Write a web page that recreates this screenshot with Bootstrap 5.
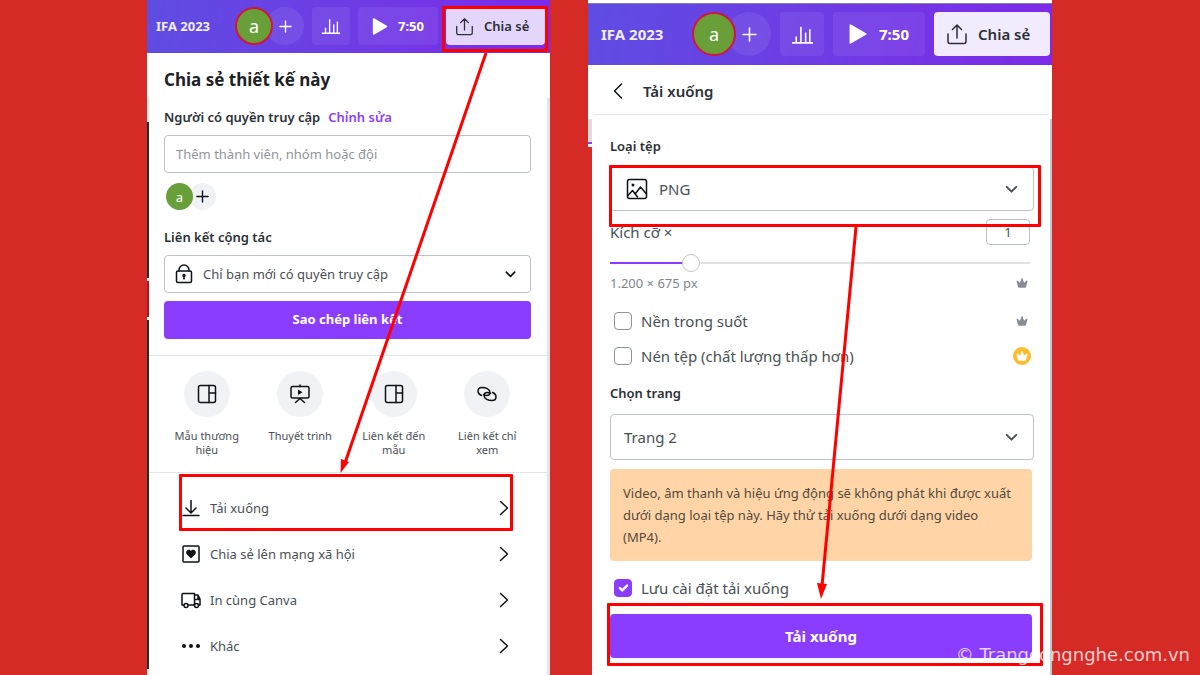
<!DOCTYPE html>
<html lang="vi">
<head>
<meta charset="utf-8">
<meta name="viewport" content="width=device-width, initial-scale=1">
<title>Chia sẻ thiết kế</title>
<link href="https://cdn.jsdelivr.net/npm/bootstrap@5.3.0/dist/css/bootstrap.min.css" rel="stylesheet">
<style>
:root{--violet:#8b3dff;--ink:#0d1216;--head:#2b3036;--soft:#4a4f55;--line:#bdc3c9;--mark:#ff0000}
body{background:#d62a26;font-family:"Noto Sans",sans-serif;color:var(--ink);font-size:13px;line-height:18px}
svg{display:block;fill:none;stroke:currentColor;stroke-width:1.5;stroke-linecap:round;stroke-linejoin:round;flex:none}
.stage{display:grid;grid-template-columns:147fr 403fr 38fr 464fr 148fr;min-height:100vh}
.shot{display:flex;flex-direction:column;position:relative;min-width:0}
.shot-share{grid-column:2;background:linear-gradient(#fff 98px,#e2e3e8 98px) right/50% 100% no-repeat,linear-gradient(#fff 98px,#e2e3e8 98px 122px,#2a2a2d 122px 278px,#fff 278px 281px,#b3151c 281px 317px,#fff 317px 320px,#2a2a2d 320px 669px,#e2e3e8 669px)}
.shot-download{grid-column:4;background:linear-gradient(#fff 119px,#c9c6d6 119px) right/50% 100% no-repeat,linear-gradient(#fff 119px,#dcdce3 119px 142px,var(--violet) 142px 144px,#fff 144px 147px,#d62a26 147px)}
.topbar{background:linear-gradient(100deg,#5f4de2,#7d2ae8);color:#fff;height:53px;padding:7px 5px 8px 9px;--size:38px;--gap:8px}
.doc-name{font-weight:700;color:#f0edff}
.tools{gap:var(--gap)}
.avatar{width:var(--size);height:var(--size);border-radius:50%;background:#689f38;color:#fff;display:flex;align-items:center;justify-content:center;position:relative;z-index:1}
.topbar .avatar{border:2px solid #d3143c;font-size:18px}
.plus{width:var(--size);height:var(--size);border-radius:50%;border:0;padding:0;display:flex;align-items:center;justify-content:center;margin-left:-7px;background:#ffffff14;color:inherit}
.tool{height:var(--size);border:0;border-radius:4px;background:#ffffff12;color:#fff;display:flex;align-items:center;justify-content:center;padding:0;font-weight:700;position:relative}
.tool-chart{width:var(--size)}
.tool-play{width:80px;gap:10px}
.tool-share{width:99px;gap:10px;background:#e4d6fb;color:var(--head);font-weight:600;justify-content:start;padding-left:9px}
.shot-download .topbar{height:65px;border-top:3px solid #fff;box-shadow:inset 0 1px #85809c;padding:9px 2px 9px 13px;font-size:15px;--size:44px;--gap:9px}
.shot-download .tool-play{width:92px;gap:12px}
.shot-download .tool-share{width:116px;gap:10px;padding-left:12px;background:#f2eafd}
.shot-download .plus{margin-left:-9px}
.marked{position:relative}
.marked::after{content:"";position:absolute;border:3px solid var(--mark);z-index:2;pointer-events:none;border-radius:1px}
.tool-share.marked::after{inset:-1px -3px -7px -4px}
.sheet{background:#fff;flex:1;position:relative}
.shot-share .sheet{margin:0 3px 0 2px}
.shot-download .sheet{margin:0 2px 0 4px}
.sheet-part{padding:15px 16px 16px 15px}
.sheet-title{font-size:17px;line-height:24px;font-weight:700;margin:0 0 16px;color:#1d2227}
.lbl{font-weight:600;margin:0;color:var(--head)}
.lnk{color:var(--violet);text-decoration:none;font-weight:600}
.lbl-row{margin-bottom:9px}
.field{font-size:13px;line-height:20px;border:1px solid var(--line);border-radius:4px;color:var(--soft);height:38px;padding:0 11px;background:#fff}
.field::placeholder{color:#90959a}
.pick{position:relative}
.pick .field{width:100%;appearance:none}
.pick svg{position:absolute;top:50%;transform:translateY(-50%);pointer-events:none}
.pick .lead-ico{left:11px;color:var(--ink)}
.pick .arrow{right:14px}
.with-ico .field{padding-left:38px}
.people{--size:27px;padding-left:2px;margin:10px 0 18px}
.people .plus{background:#f1f2f5;margin-left:-4px}
.btn-violet{--bs-btn-bg:var(--violet);--bs-btn-color:#fff;--bs-btn-hover-bg:#7731d8;--bs-btn-hover-color:#fff;--bs-btn-border-color:transparent;--bs-btn-border-radius:4px;--bs-btn-padding-y:0;font-size:13px;font-weight:700;height:38px}
.rule{border-top:1px solid #e3e5e8}
.shortcuts{padding:15px 13px 15px 11px;display:grid;grid-template-columns:repeat(4,1fr)}
.shortcut{border:0;background:none;padding:0 8px;font-size:11px;line-height:14px;color:var(--soft);display:flex;flex-direction:column;align-items:center}
.disc{width:46px;height:46px;border-radius:50%;background:#f1f2f5;color:var(--ink);display:flex;align-items:center;justify-content:center;margin-bottom:12px}
.actions{padding:12px 38px 0 32px}
.action{height:46px;display:flex;align-items:center;gap:9px;color:var(--soft);text-decoration:none}
.action svg{color:var(--ink)}
.action.marked::after{inset:-11px -4px 0 -2px}
.sheet-head{height:50px;padding:3px 18px 0;margin:0 2px;border-bottom:1px solid #e3e5e8;gap:19px}
.sheet-head h2{font-size:15px;line-height:22px;font-weight:600;margin:0;color:var(--head)}
.back{border:0;background:none;padding:0;color:var(--ink)}
.form-part{padding:21px 16px 16px 18px;color:var(--soft);font-size:15px;line-height:22px}
.form-part .lbl{font-size:13px;line-height:20px}
.form-part .field{font-size:15px;height:46px;padding-left:13px}
.form-part .with-ico .field{padding-left:48px;height:45px}
.form-part .lead-ico{left:16px}
.form-part .arrow{right:15px}
.lbl-type{margin-bottom:10px}
.pick-type.marked::after{inset:-1px -7px -16px -1px}
.form-part .qty{width:44px;height:26px;font-size:13px;padding:0;text-align:center}
.size-row{margin:9px 4px 1px 0}
.size-range{appearance:none;width:100%;height:18px;margin:0;background:linear-gradient(var(--violet),var(--violet)) 0 50%/19% 2px no-repeat,linear-gradient(#e1e3e6,#e1e3e6) 0 50%/100% 2px no-repeat;display:block}
.size-range::-webkit-slider-thumb{appearance:none;width:18px;height:18px;border-radius:50%;background:#fff;border:1px solid #bfc4ca}
.note{font-size:13px;line-height:20px;color:#80868c}
.crown{fill:#878d94;stroke:none}
.opt{display:flex;justify-content:space-between;align-items:center;padding-right:6px}
.opt-clear{margin-top:17px}
.opt-pro{padding-right:3px;margin:13px 0}
.pro{width:18px;height:18px;border-radius:50%;background:#fdbc2c;display:flex;align-items:center;justify-content:center}
.pro .crown{fill:#fff}
.tick{padding-left:4px;gap:9px;display:flex;align-items:center}
.tick .form-check-input{width:18px;height:18px;margin:0;border-color:#8f959b;border-radius:4px;float:none}
.tick .form-check-input:checked{background-color:var(--violet);border-color:var(--violet)}
.lbl-page{margin:16px 0 11px}
.form-part .lbl-page{margin:16px 0 11px}
.form-part .lbl-type{margin-bottom:10px}
.hint{background:#ffd5a8;border-radius:4px;padding:13px;font-size:13px;line-height:22px;color:#54493c;margin:9px 2px 16px 0}
.save{margin:15px 2px 0 0}
.save.marked::after{inset:-11px -11px -8px -3px}
.save .btn-violet{font-size:15px;height:44px}
.pointer{position:absolute;left:0;top:0;width:100%;height:auto;z-index:3;pointer-events:none;stroke:var(--mark);stroke-width:3;stroke-linecap:butt;overflow:visible}
.pointer polygon{fill:var(--mark);stroke:none}
.credit{position:absolute;right:10px;bottom:8px;z-index:4;color:#ffffffc8;font-family:"DejaVu Sans","Noto Sans",sans-serif;font-size:18px;line-height:24px;margin:0}
</style>
</head>
<body>
<svg width="0" height="0" class="position-absolute" aria-hidden="true">
  <symbol id="i-plus" viewBox="0 0 14 14"><path d="M7 1v12M1 7h12"/></symbol>
  <symbol id="i-chart" viewBox="0 0 22 22"><path d="M1 19h20M5 19v-6M9.500 19V3.500M14 19V9M18 19V6" stroke-linecap="butt"/></symbol>
  <symbol id="i-up" viewBox="0 0 22 22"><path d="M11 15V2M6.500 6.500 11 2l4.500 4.500M2 11v7.500a2 2 0 0 0 2 2h14a2 2 0 0 0 2-2V11"/></symbol>
  <symbol id="i-down" viewBox="0 0 14 14"><path d="M2.500 5 7 9.500 11.500 5" stroke-width="1.800"/></symbol>
  <symbol id="i-next" viewBox="0 0 10 16"><path d="m1.500 1.500 7 6.500-7 6.500"/></symbol>
  <symbol id="i-layout" viewBox="0 0 20 20"><rect x="1.500" y="1.500" width="17" height="17" rx="2"/><path d="M12 1.500v17M12 9h6.500"/></symbol>
  <symbol id="i-crown" viewBox="0 0 12 12"><path d="M.5 4 1.500 3.500 3.800 5.700 5.300 2.200 5.300 1.200h1.400v1l1.500 3.500 2.300-2.200 1 .5L10 10a1 1 0 0 1-1 .8H3A1 1 0 0 1 2 10z"/></symbol>
</svg>
<main class="stage position-relative">
  <section class="shot shot-share">
    <header class="topbar d-flex align-items-center">
      <span class="doc-name">IFA 2023</span>
      <div class="tools d-flex ms-auto">
        <div class="d-flex"><span class="avatar">a</span><button class="plus" type="button" aria-label="Thêm"><svg width="13" height="13"><use href="#i-plus"/></svg></button></div>
        <button class="tool tool-chart" type="button" aria-label="Thống kê"><svg width="20" height="20" stroke-width="1.300"><use href="#i-chart"/></svg></button>
        <button class="tool tool-play" type="button"><svg width="16" height="17" viewBox="0 0 14 16"><path fill="currentColor" d="M1 1v14l12-7z"/></svg>7:50</button>
        <button class="tool tool-share marked" type="button"><svg width="19" height="19"><use href="#i-up"/></svg>Chia sẻ</button>
      </div>
    </header>
    <div class="sheet">
      <div class="sheet-part">
        <h1 class="sheet-title">Chia sẻ thiết kế này</h1>
        <div class="lbl-row d-flex gap-2"><label class="lbl" for="people">Người có quyền truy cập</label><a class="lnk" href="#">Chỉnh sửa</a></div>
        <input class="field w-100 d-block" id="people" type="text" placeholder="Thêm thành viên, nhóm hoặc đội">
        <div class="people d-flex"><span class="avatar">a</span><button class="plus" type="button" aria-label="Thêm người"><svg width="13" height="13"><use href="#i-plus"/></svg></button></div>
        <div class="lbl-row"><label class="lbl d-block" for="access">Liên kết cộng tác</label></div>
        <div class="pick with-ico">
          <svg class="lead-ico" width="18" height="20" viewBox="0 0 18 20"><rect x="1.500" y="7" width="15" height="11.500" rx="1.500"/><path d="M4 7V6a5 5 0 0 1 10 0v1M9 12v3"/><circle cx="9" cy="11.500" r="1" fill="currentColor"/></svg>
          <select class="field" id="access"><option>Chỉ bạn mới có quyền truy cập</option></select>
          <svg class="arrow" width="13" height="13"><use href="#i-down"/></svg>
        </div>
        <button class="btn btn-violet w-100 mt-2" type="button">Sao chép liên kết</button>
      </div>
      <div class="rule shortcuts">
        <button class="shortcut" type="button"><span class="disc"><svg width="20" height="20"><use href="#i-layout"/></svg></span>Mẫu thương hiệu</button>
        <button class="shortcut" type="button"><span class="disc"><svg width="20" height="20" viewBox="0 0 20 20"><rect x="1" y="2.500" width="18" height="11.500" rx="1.500"/><path d="M10 1v1.500M5.500 18.500 10 14.500l4.500 4"/><path fill="currentColor" stroke="none" d="M8 5.500v5.500l4.500-2.750z"/></svg></span>Thuyết trình</button>
        <button class="shortcut" type="button"><span class="disc"><svg width="20" height="20"><use href="#i-layout"/></svg></span>Liên kết đến mẫu</button>
        <button class="shortcut" type="button"><span class="disc"><svg width="20" height="16" viewBox="0 0 20 16"><path d="M4.500 9.500C2.500 8.800 1 7.200 1 5.300 1 3 2.800 1.500 5 1.500c3.500 0 8 1.500 8 5 0 1.800-1.500 3-3.300 3-1.200 0-2.200-.3-3.200-.8M15.500 6.500c2 .7 3.500 2.300 3.500 4.200 0 2.300-1.800 3.800-4 3.800-3.500 0-8-1.500-8-5 0-1.800 1.500-3 3.300-3 1.200 0 2.200.3 3.200.8"/></svg></span>Liên kết chỉ xem</button>
      </div>
      <nav class="rule actions">
        <a class="action marked" href="#"><svg width="20" height="20" viewBox="0 0 20 20"><path d="M10 2.500v12M5 10l5 5 5-5M2 17.500h16"/></svg><span>Tải xuống</span><svg class="ms-auto" width="10" height="16"><use href="#i-next"/></svg></a>
        <a class="action" href="#"><svg width="20" height="20" viewBox="0 0 20 20"><rect x="2" y="2" width="16" height="16" rx="1"/><path fill="currentColor" stroke="none" d="M10 14.500 6 10.500C4 8 6 5.500 8 5.700c1 0 1.700.6 2 1.300.3-.7 1-1.300 2-1.300 2-.2 4 2.300 2 4.800z"/></svg><span>Chia sẻ lên mạng xã hội</span><svg class="ms-auto" width="10" height="16"><use href="#i-next"/></svg></a>
        <a class="action" href="#"><svg width="20" height="20" viewBox="0 0 20 20"><path d="M2.500 15H1V4.500a1 1 0 0 1 1-1h11.500V15H7.500M13.500 5H17l2 4v6h-1M14 9.500h5M17 5v4.500"/><circle cx="5" cy="15.500" r="2"/><circle cx="15.500" cy="15.500" r="2"/></svg><span>In cùng Canva</span><svg class="ms-auto" width="10" height="16"><use href="#i-next"/></svg></a>
        <a class="action" href="#"><svg width="20" height="20" viewBox="0 0 20 20"><g fill="currentColor" stroke="none"><circle cx="3" cy="10" r="2"/><circle cx="10" cy="10" r="2"/><circle cx="17" cy="10" r="2"/></g></svg><span>Khác</span><svg class="ms-auto" width="10" height="16"><use href="#i-next"/></svg></a>
      </nav>
    </div>
    <svg class="pointer" viewBox="0 0 403 675" aria-hidden="true"><path d="M339 53 198 463"/><polygon points="193.500,473 194,459 202,462"/></svg>
  </section>

  <section class="shot shot-download">
    <header class="topbar d-flex align-items-center">
      <span class="doc-name">IFA 2023</span>
      <div class="tools d-flex ms-auto">
        <div class="d-flex"><span class="avatar">a</span><button class="plus" type="button" aria-label="Thêm"><svg width="15" height="15"><use href="#i-plus"/></svg></button></div>
        <button class="tool tool-chart" type="button" aria-label="Thống kê"><svg width="23" height="23"><use href="#i-chart"/></svg></button>
        <button class="tool tool-play" type="button"><svg width="18" height="20" viewBox="0 0 14 16"><path fill="currentColor" d="M1 1v14l12-7z"/></svg>7:50</button>
        <button class="tool tool-share" type="button"><svg width="22" height="22"><use href="#i-up"/></svg>Chia sẻ</button>
      </div>
    </header>
    <div class="sheet">
      <div class="sheet-head d-flex align-items-center">
        <button class="back" type="button" aria-label="Quay lại"><svg width="12" height="18" viewBox="0 0 12 18"><path d="M9.500 2 2.500 9l7 7"/></svg></button>
        <h2>Tải xuống</h2>
      </div>
      <form class="form-part" onsubmit="return false">
        <label class="lbl lbl-type d-block" for="type">Loại tệp</label>
        <div class="pick with-ico pick-type marked">
          <svg class="lead-ico" width="22" height="22" viewBox="0 0 22 22"><rect x="1.500" y="1.500" width="19" height="19" rx="2"/><path d="m1.500 18 5-5.500 5 6.500M9.500 15.500 14.500 9l6 7"/><circle cx="7" cy="7" r="1.500" fill="currentColor" stroke="none"/></svg>
          <select class="field" id="type"><option>PNG</option></select>
          <svg class="arrow" width="15" height="15"><use href="#i-down"/></svg>
        </div>
        <div class="d-flex justify-content-between align-items-center mt-2 me-1"><label for="qty">Kích cỡ ×</label><input class="field qty" id="qty" type="text" value="1"></div>
        <div class="size-row"><input class="size-range" type="range" min="0.5" max="3.3" step="0.1" value="1" aria-label="Kích cỡ"></div>
        <div class="opt"><span class="note">1.200 × 675 px</span><svg class="crown" width="12" height="12"><use href="#i-crown"/></svg></div>
        <div class="opt opt-clear"><div class="tick"><input class="form-check-input" type="checkbox" id="clear"><label for="clear">Nền trong suốt</label></div><svg class="crown" width="12" height="12"><use href="#i-crown"/></svg></div>
        <div class="opt opt-pro"><div class="tick"><input class="form-check-input" type="checkbox" id="zip"><label for="zip">Nén tệp (chất lượng thấp hơn)</label></div><span class="pro"><svg class="crown" width="12" height="12"><use href="#i-crown"/></svg></span></div>
        <label class="lbl lbl-page d-block" for="page">Chọn trang</label>
        <div class="pick">
          <select class="field" id="page"><option>Trang 2</option></select>
          <svg class="arrow" width="15" height="15"><use href="#i-down"/></svg>
        </div>
        <p class="hint">Video, âm thanh và hiệu ứng động sẽ không phát khi được xuất dưới dạng loại tệp này. Hãy thử tải xuống dưới dạng video (MP4).</p>
        <div class="tick"><input class="form-check-input" type="checkbox" id="keep" checked><label for="keep">Lưu cài đặt tải xuống</label></div>
        <div class="save marked"><button class="btn btn-violet w-100" type="submit">Tải xuống</button></div>
      </form>
    </div>
    <svg class="pointer" viewBox="0 0 464 675" aria-hidden="true"><path d="M268 227 234 586"/><polygon points="233,599 229,583 239,584"/></svg>
  </section>
  <p class="credit">© Trangcongnghe.com.vn</p>
</main>
<script src="https://cdn.jsdelivr.net/npm/bootstrap@5.3.0/dist/js/bootstrap.bundle.min.js"></script>
</body>
</html>
